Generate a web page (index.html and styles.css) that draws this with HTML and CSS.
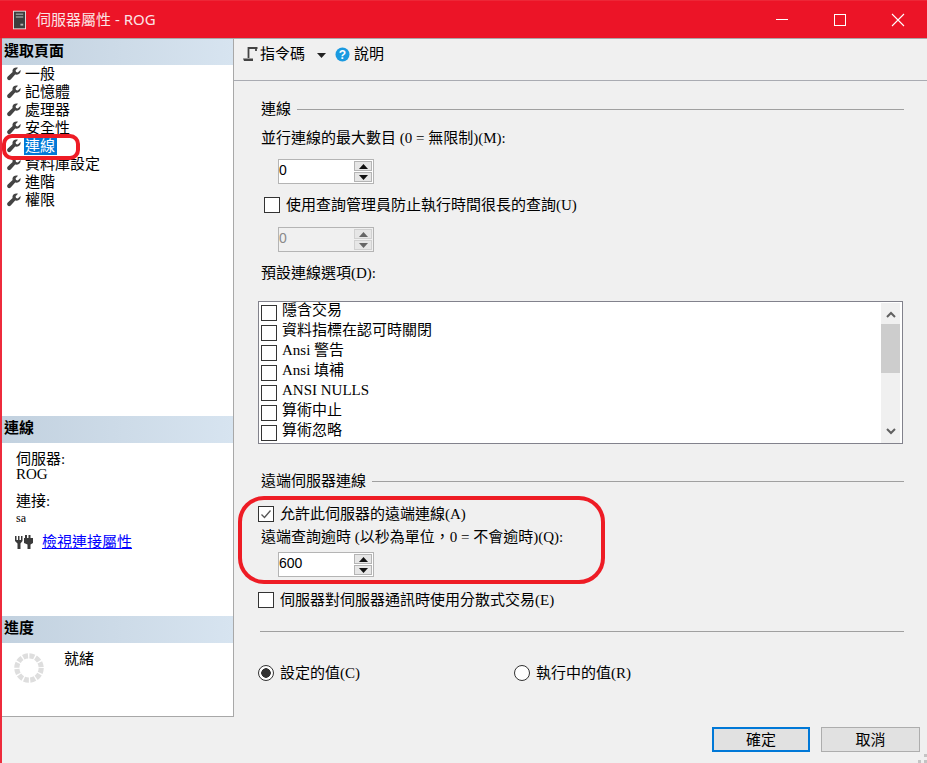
FILE: index.html
```html
<!DOCTYPE html>
<html lang="zh-Hant">
<head>
<meta charset="utf-8">
<title>伺服器屬性 - ROG</title>
<link rel="stylesheet" href="styles.css">
</head>
<body>
<svg class="defs" width="0" height="0" aria-hidden="true">
  <symbol id="wrench" viewBox="0 0 14 14"><path d="M13.500 3 10.800 5.400 9 5 8.600 3.200 11 .8C8.500-.2 5.800 1.200 5.500 3.500c-.1.6 0 1.100.1 1.600L.8 9.500c-.9.9-.9 2.200-.1 3 .9.900 2.100.8 3-.1l4.500-4.800c2.900.7 6.200-1.800 5.300-4.600Z" fill="#444"/></symbol>
  <symbol id="up" viewBox="0 0 9 5"><path d="M4.500 0 9 5H0Z" fill="currentColor"/></symbol>
  <symbol id="down" viewBox="0 0 9 5"><path d="M0 0H9L4.500 5Z" fill="currentColor"/></symbol>
</svg>
<div class="window">
  <header class="titlebar">
    <svg class="server-icon" viewBox="0 0 14 20"><rect x="0" y="0" width="14" height="20" fill="#e9e3e3"/><rect x="1" y="1" width="12" height="18" fill="#3d3d3d"/><rect x="3" y="3" width="8" height="1.500" fill="#9a9a9a"/><rect x="3" y="6" width="8" height="1.500" fill="#9a9a9a"/><rect x="8" y="14" width="3" height="2" fill="#b0b0b0"/></svg>
    <span class="title">伺服器屬性 - ROG</span>
    <div class="win-controls">
      <svg class="win-btn" viewBox="0 0 46 38"><path d="M17 18.500H29" stroke="#fff" stroke-width="1"/></svg>
      <svg class="win-btn win-max" viewBox="0 0 46 38"><rect x="17.500" y="13.500" width="11" height="11" fill="none" stroke="#fff" stroke-width="1"/></svg>
      <svg class="win-btn win-close" viewBox="0 0 46 38"><path d="M17 13 29 25M29 13 17 25" stroke="#fff" stroke-width="1.100"/></svg>
    </div>
  </header>
  <div class="main">
    <aside class="sidebar">
      <div class="side-head side-head-first">選取頁面</div>
      <ul class="pages">
        <li class="page"><svg class="wrench"><use href="#wrench"/></svg><span>一般</span></li>
        <li class="page"><svg class="wrench"><use href="#wrench"/></svg><span>記憶體</span></li>
        <li class="page"><svg class="wrench"><use href="#wrench"/></svg><span>處理器</span></li>
        <li class="page"><svg class="wrench"><use href="#wrench"/></svg><span>安全性</span></li>
        <li class="page"><svg class="wrench"><use href="#wrench"/></svg><span class="selected">連線</span></li>
        <li class="page"><svg class="wrench"><use href="#wrench"/></svg><span>資料庫設定</span></li>
        <li class="page"><svg class="wrench"><use href="#wrench"/></svg><span>進階</span></li>
        <li class="page"><svg class="wrench"><use href="#wrench"/></svg><span>權限</span></li>
      </ul>
      <div class="side-head">連線</div>
      <div class="conn">
        <div class="conn-line">伺服器:</div>
        <div class="conn-line conn-value">ROG</div>
        <div class="conn-line conn-gap">連接:</div>
        <div class="conn-line conn-small">sa</div>
        <div class="conn-link-row">
          <svg class="plug" viewBox="0 0 20 16"><path d="M1 2h1.500v4H4V2h1.500v4H7V2h1.500v5L6.500 9.500V15h-3V9.500L1 7ZM11 1h2v3h1.500V1h2v3H19v5l-2.500 1.500V15h-3v-4.500L10 9V4h1Z" fill="#3a3a3a"/></svg>
          <a class="conn-link" href="#">檢視連接屬性</a>
        </div>
      </div>
      <div class="side-head">進度</div>
      <div class="progress">
        <svg class="spinner" viewBox="0 0 32 32"><circle cx="16" cy="16" r="13" fill="none" stroke="#dedede" stroke-width="5.500" stroke-dasharray="5.300 1.510"/></svg>
        <span>就緒</span>
      </div>
    </aside>
    <section class="pane">
      <div class="toolbar">
        <svg class="script-icon" viewBox="0 0 16 16"><path d="M5 2H14.500M5.500 1v11M13 2v3" fill="none" stroke="#444" stroke-width="1.800"/><path d="M0 12.500H10V15H1Z" fill="#444"/></svg>
        <span class="tool-label">指令碼</span>
        <svg class="tool-caret"><use href="#down"/></svg>
        <svg class="help-icon" viewBox="0 0 15 15"><circle cx="7.500" cy="7.500" r="7" fill="#1b9ae0"/><text class="help-q" x="7.500" y="11.500" text-anchor="middle">?</text></svg>
        <span class="tool-label">說明</span>
      </div>
      <div class="form">
        <div class="group-head"><span>連線</span><i class="rule"></i></div>
        <div class="label label-max">並行連線的最大數目 (0 = 無限制)(M):</div>
        <div class="spin">
          <span class="spin-value">0</span>
          <span class="spin-btns"><b class="spin-btn"><svg class="arrow"><use href="#up"/></svg></b><b class="spin-btn"><svg class="arrow"><use href="#down"/></svg></b></span>
        </div>
        <div class="check-row check-gov"><i class="box"></i><span>使用查詢管理員防止執行時間很長的查詢(U)</span></div>
        <div class="spin spin-off">
          <span class="spin-value">0</span>
          <span class="spin-btns"><b class="spin-btn"><svg class="arrow"><use href="#up"/></svg></b><b class="spin-btn"><svg class="arrow"><use href="#down"/></svg></b></span>
        </div>
        <div class="label label-opts">預設連線選項(D):</div>
        <div class="listbox">
          <ul class="options">
            <li class="option"><i class="box"></i><span>隱含交易</span></li>
            <li class="option"><i class="box"></i><span>資料指標在認可時關閉</span></li>
            <li class="option"><i class="box"></i><span>Ansi 警告</span></li>
            <li class="option"><i class="box"></i><span>Ansi 填補</span></li>
            <li class="option"><i class="box"></i><span>ANSI NULLS</span></li>
            <li class="option"><i class="box"></i><span>算術中止</span></li>
            <li class="option"><i class="box"></i><span>算術忽略</span></li>
          </ul>
          <div class="scrollbar">
            <svg class="chev" viewBox="0 0 10 7"><path d="M1 6 5 2 9 6" fill="none" stroke="#606060" stroke-width="2"/></svg>
            <div class="thumb"></div>
            <svg class="chev chev-down" viewBox="0 0 10 7"><path d="M1 1 5 5 9 1" fill="none" stroke="#606060" stroke-width="2"/></svg>
          </div>
        </div>
        <div class="group-head group-remote"><span>遠端伺服器連線</span><i class="rule"></i></div>
        <div class="check-row check-allow">
          <i class="box"><svg class="tick" viewBox="0 0 14 14"><path d="M2.500 7.500 5.500 10.500 11.500 3.500" fill="none" stroke="#555" stroke-width="1.300"/></svg></i>
          <span>允許此伺服器的遠端連線(A)</span>
        </div>
        <div class="label label-timeout">遠端查詢逾時 (以秒為單位，0 = 不會逾時)(Q):</div>
        <div class="spin spin-600">
          <span class="spin-value">600</span>
          <span class="spin-btns"><b class="spin-btn"><svg class="arrow"><use href="#up"/></svg></b><b class="spin-btn"><svg class="arrow"><use href="#down"/></svg></b></span>
        </div>
        <div class="check-row check-dist"><i class="box"></i><span>伺服器對伺服器通訊時使用分散式交易(E)</span></div>
        <hr class="sep">
        <div class="radios">
          <label class="radio-item radio-first"><i class="radio radio-on"></i><span>設定的值(C)</span></label>
          <label class="radio-item"><i class="radio"></i><span>執行中的值(R)</span></label>
        </div>
      </div>
    </section>
  </div>
  <footer class="footer">
    <button class="btn btn-default">確定</button>
    <button class="btn">取消</button>
    <svg class="grip" viewBox="0 0 9 9"><path d="M6 0h3v3H6ZM0 6h3v3H0ZM6 6h3v3H6Z" fill="#c4c4c4"/></svg>
  </footer>
  <div class="mark mark-page"></div>
  <div class="mark mark-remote"></div>
</div>
</body>
</html>
```

FILE: styles.css
```css
* { box-sizing: border-box; }
html, body { margin: 0; padding: 0; }
body {
  width: 927px;
  height: 763px;
  overflow: hidden;
  background: #f0f0f0;
  color: #000;
  font: 15px/20px "Liberation Serif", "Noto Sans CJK TC", serif;
}
ul { list-style: none; margin: 0; padding: 0; }
i, b { display: block; font-style: normal; font-weight: normal; }
.defs { position: absolute; }

.window {
  position: relative;
  width: 927px;
  height: 763px;
  display: flex;
  flex-direction: column;
  border-left: 2px solid #ee2b3c;
}

.titlebar {
  height: 38px;
  margin-left: -2px;
  flex: none;
  display: flex;
  align-items: center;
  padding-left: 13px;
  background: #ec1427;
  border-top: 1px solid #ed2737;
  color: #fff;
}
.server-icon { width: 13px; height: 20px; margin-right: 10px; }
.title { font: 15px/20px "Noto Sans", "Noto Sans CJK TC", sans-serif; color: #fbe3e5; margin-top: -2px; }
.win-controls { margin-left: auto; display: flex; padding-right: 6px; }
.win-btn { width: 46px; height: 38px; display: block; margin-right: 12px; }
.win-btn.win-close { margin-right: 0; }

.main { height: 679px; flex: none; display: flex; border-top: 1px solid #a8a8a8; }

.sidebar {
  width: 232px;
  flex: none;
  display: flex;
  flex-direction: column;
  background: #fff;
  border-right: 1px solid #a8a8a8;
  border-bottom: 1px solid #a8a8a8;
}
.side-head {
  height: 27px;
  flex: none;
  padding-left: 2px;
  font-weight: bold;
  line-height: 25px;
  background: linear-gradient(to right, #c2d1df, #d7e4f0);
}
.side-head-first { height: 26px; }
.pages { height: 351px; flex: none; }
.page { height: 18px; display: flex; align-items: center; padding-left: 5px; line-height: 18px; }
.wrench { width: 14px; height: 14px; margin-right: 3px; flex: none; }
.page span { padding: 0 1px 0 1px; }
.selected { background: #0078d7; color: #fff; width: 33px; }

.conn { height: 173px; flex: none; padding: 9px 0 0 14px; }
.conn-line { height: 15px; line-height: 15px; }
.conn-gap { margin-top: 12px; }
.conn-small { font-size: 12px; }
.conn-gap + .conn-small { margin-top: 2px; }
.conn-link-row { display: flex; align-items: center; margin-top: 6px; height: 20px; }
.plug { width: 20px; height: 16px; margin-right: 8px; margin-left: -2px; }
.conn-link { color: #0000ff; text-decoration: underline; }

.progress { flex: 1; display: flex; align-items: flex-start; padding: 6px 0 0 12px; }
.spinner { width: 30px; height: 30px; margin: 4px 20px 0 0; }

.pane { flex: 1; min-width: 0; }
.toolbar {
  height: 42px;
  display: flex;
  align-items: center;
  padding: 0 0 11px 9px;
  border-bottom: 1px solid #a9abb2;
}
.script-icon { width: 16px; height: 16px; margin-right: 1px; }
.tool-label { line-height: 20px; }
.tool-caret { width: 9px; height: 5px; margin: 2px 9px 0 12px; color: #222; }
.help-icon { width: 15px; height: 15px; margin-right: 4px; }
.help-q { font: bold 12px "Liberation Sans", sans-serif; fill: #fff; }

.form { padding: 18px 23px 0 27px; }
.group-head { height: 20px; display: flex; align-items: center; }
.rule { flex: 1; height: 1px; background: #a0a0a0; margin-left: 6px; }
.label { height: 20px; line-height: 20px; }
.label-max { margin-top: 9px; }
.label-opts { margin-top: 11px; }
.label-timeout { margin-top: 3px; }

.spin {
  width: 96px;
  height: 25px;
  margin: 11px 0 0 17px;
  display: flex;
  justify-content: space-between;
  background: #fff;
  border: 1px solid #b4b4b4;
}
.spin-value { line-height: 20px; font-family: "Liberation Sans", sans-serif; font-size: 14px; }
.spin-btns { width: 18px; margin: 1px 1px 1px 0; display: flex; flex-direction: column; gap: 1px; background: #fff; }
.spin-btn { flex: 1; display: flex; align-items: center; justify-content: center; background: #e6e6e6; border: 1px solid #b4b4b4; color: #111; }
.arrow { width: 9px; height: 5px; }
.spin-off { margin-top: 12px; background: #f0f0f0; color: #8a8a8a; }
.spin-off .spin-btns { background: #f0f0f0; }
.spin-off .spin-btn { border-color: #d0d0d0; color: #666; }
.spin-600 { margin-top: 5px; }

.box {
  width: 16px;
  height: 16px;
  flex: none;
  background: #fff;
  border: 1px solid #333;
}
.check-row { display: flex; align-items: center; height: 20px; }
.check-row .box { margin-right: 6px; }
.check-gov { margin: 11px 0 0 3px; }
.check-gov .box { margin-right: 6px; }
.check-allow { margin-top: 13px; margin-left: -3px; }
.check-dist { margin-top: 13px; margin-left: -3px; }
.tick { display: block; width: 14px; height: 14px; }

.listbox {
  height: 143px;
  margin: 18px 1px 0 -3px;
  display: flex;
  background: #fff;
  border: 1px solid #82828c;
  padding: 1px 2px 0 2px;
  overflow: hidden;
}
.options { flex: 1; margin-top: -1px; }
.option { height: 20px; display: flex; align-items: flex-start; }
.option .box { margin-top: 3px; margin-right: 5px; }
.option span { line-height: 15px; margin-top: 1px; }
.scrollbar { width: 19px; height: 140px; flex: none; background: #f0f0f0; display: flex; flex-direction: column; align-items: center; }
.chev { width: 10px; height: 7px; margin: 8px 0 6px; flex: none; }
.thumb { width: 19px; height: 49px; flex: none; background: #cdcdcd; }
.chev-down { margin: auto 0 8px; }

.group-remote { margin-top: 27px; }
.sep { height: 1px; margin: 21px 0 0 -1px; border: 0; background: #a0a0a0; }
.radios { display: flex; margin: 31px 0 0 -3px; height: 20px; }
.radio-item { display: flex; align-items: center; }
.radio-first { width: 256px; }
.radio { width: 16px; height: 16px; margin-right: 6px; border-radius: 50%; border: 1px solid #333; background: #fff; position: relative; }
.radio-on { background: radial-gradient(circle, #333 0 4.500px, #fff 5px); }

.footer { flex: 1; display: flex; position: relative; padding: 10px 0 0 710px; gap: 11px; align-items: flex-start; }
.btn {
  width: 99px;
  height: 25px;
  padding: 0;
  background: #e1e1e1;
  border: 1px solid #adadad;
  font: 15px/20px "Liberation Serif", "Noto Sans CJK TC", serif;
  color: #000;
}
.btn-default { width: 98px; border: 2px solid #0078d7; }
.grip { position: absolute; right: 0; bottom: 0; width: 9px; height: 9px; }

.mark { position: absolute; border: 4px solid #ee1c25; pointer-events: none; }
.mark-page { left: 0; top: 134px; width: 78px; height: 26px; border-radius: 10px; }
.mark-remote { left: 236px; top: 496px; width: 367px; height: 88px; border-radius: 26px; }
```
